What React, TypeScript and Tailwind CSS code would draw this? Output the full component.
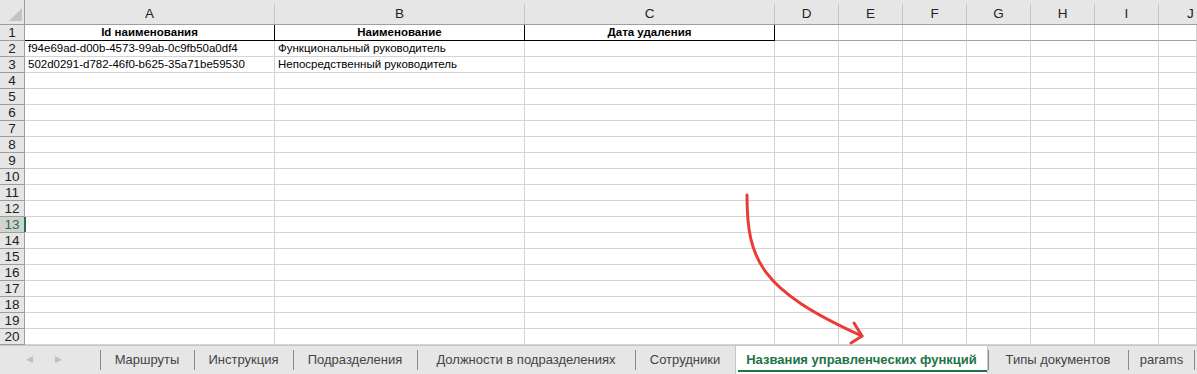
import React from "react";

const cols = ["A", "B", "C", "D", "E", "F", "G", "H", "I", "J"];
const gridCols =
  "grid grid-cols-[25px_250px_250px_250px_64px_64px_64px_64px_64px_64px_1fr]";

const data: Record<number, string[]> = {
  2: ["f94e69ad-d00b-4573-99ab-0c9fb50a0df4", "Функциональный руководитель", ""],
  3: ["502d0291-d782-46f0-b625-35a71be59530", "Непосредственный руководитель", ""],
};

const tabs = [
  { name: "Маршруты", w: "w-[94px]" },
  { name: "Инструкция", w: "w-[99px]" },
  { name: "Подразделения", w: "w-[124px]" },
  { name: "Должности в подразделениях", w: "w-[218px]" },
  { name: "Сотрудники", w: "w-[100px]" },
  { name: "Названия управленческих функций", w: "w-[253px]", active: true },
  { name: "Типы документов", w: "w-[140px]" },
  { name: "params", w: "w-[67px]" },
];

function HeaderRow() {
  return (
    <div className={`${gridCols} h-[25px] bg-[#e6e6e6]`}>
      <div className="relative border-r border-b border-[#9e9e9e]">
        <svg className="absolute left-[9px] top-[8px]" width="13" height="13" viewBox="0 0 13 13">
          <polygon points="13,0 13,13 0,13" fill="#c4c4c4" />
        </svg>
      </div>
      {cols.map((c, i) => (
        <div key={c} className="flex items-end border-b border-[#9e9e9e]">
          <div
            className={`h-[20px] w-full flex items-center justify-center text-[13.5px] text-[#222] ${
              i < cols.length - 1 ? "border-r border-[#c6c6c6]" : ""
            } ${i === 9 ? "justify-start pl-[28px]" : ""}`}
          >
            {c}
          </div>
        </div>
      ))}
    </div>
  );
}

function Row({ n }: { n: number }) {
  const sel = n === 13;
  const isHead = n === 1;
  const vals = isHead
    ? ["Id наименования", "Наименование", "Дата удаления"]
    : data[n] || ["", "", ""];
  return (
    <div className={`${gridCols} h-[16px]`}>
      <div
        className={`relative flex items-center justify-center border-r border-b text-[13.5px] leading-none ${
          sel
            ? "bg-[#d2d2d2] text-[#217346] border-[#9e9e9e]"
            : "bg-[#e6e6e6] text-[#222] border-[#9e9e9e]"
        }`}
      >
        {n}
        {sel && <div className="absolute right-[-2px] top-0 bottom-0 w-[2px] bg-[#217346]" />}
      </div>
      {cols.map((c, i) => {
        const v = i < 3 ? vals[i] : "";
        const headBorder = isHead && i < 3;
        return (
          <div
            key={c}
            className={`overflow-hidden whitespace-nowrap text-[11.5px] leading-[15px] text-black ${
              headBorder
                ? "border-r border-b border-black font-bold text-center"
                : isHead
                ? "border-r border-b border-r-[#d4d4d4] border-b-[#a0a0a0]"
                : "border-r border-b border-[#d4d4d4] pl-[3px]"
            }`}
          >
            {v}
          </div>
        );
      })}
    </div>
  );
}

export default function App() {
  const rows = Array.from({ length: 20 }, (_, i) => i + 1);
  return (
    <div
      className="relative w-[1197px] h-[374px] overflow-hidden bg-white flex flex-col"
      style={{ fontFamily: '"Liberation Sans", Arial, sans-serif' }}
    >
      <HeaderRow />
      {rows.map((n) => (
        <Row key={n} n={n} />
      ))}
      <div className="flex h-[29px] bg-[#e6e6e6] border-t border-[#c6c6c6] text-[13px] text-[#444]">
        <div className="w-[100px] flex items-center text-[#c0c0c0] text-[9px]">
          <span className="ml-[26px]">◀</span>
          <span className="ml-[22px]">▶</span>
        </div>
        {tabs.map((t, i) =>
          t.active ? (
            <div
              key={t.name}
              className={`${t.w} relative bg-white flex items-center justify-center font-bold text-[13px] text-[#217346] border-x border-[#c6c6c6]`}
            >
              {t.name}
              <div className="absolute left-[2px] right-0 bottom-[2px] h-[2px] bg-[#217346]" />
            </div>
          ) : (
            <div key={t.name} className={`${t.w} relative flex items-center justify-center`}>
              <div className="absolute left-0 top-[4px] bottom-[4px] w-px bg-[#8a8a8a]" />
              {t.name}
              {i === tabs.length - 1 && (
                <div className="absolute right-0 top-[4px] bottom-[4px] w-px bg-[#8a8a8a]" />
              )}
            </div>
          )
        )}
      </div>
      <svg
        className="absolute left-0 top-0 pointer-events-none"
        width="1197"
        height="374"
        viewBox="0 0 1197 374"
      >
        <path
          d="M747 195 C747 260 760 290 862 336"
          fill="none"
          stroke="#ea3b35"
          strokeWidth="3"
          strokeLinecap="round"
        />
        <path
          d="M854 323 L862 336 L851 343"
          fill="none"
          stroke="#ea3b35"
          strokeWidth="3"
          strokeLinecap="round"
          strokeLinejoin="round"
        />
      </svg>
    </div>
  );
}
